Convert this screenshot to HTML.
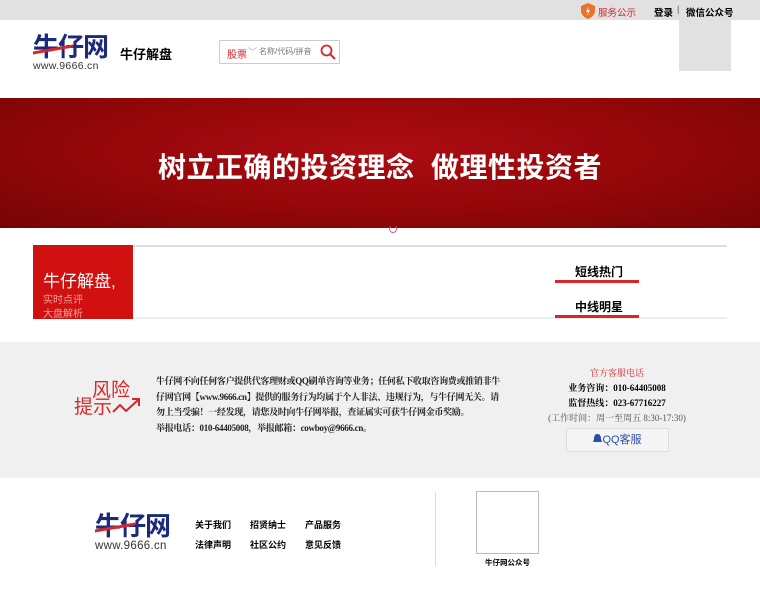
<!DOCTYPE html>
<html><head><meta charset="utf-8">
<style>
*{margin:0;padding:0;box-sizing:border-box}
body{width:760px;height:600px;overflow:hidden;background:#fff;font-family:"Liberation Sans","Noto Sans CJK SC",sans-serif;position:relative;color:#000}
.a{position:absolute}
.top{left:0;top:0;width:760px;height:20px;background:#e1e1e1}
.logo{font-weight:bold;color:#1b2a7a;letter-spacing:-1px}
.url{color:#333;font-size:11px;letter-spacing:0.3px}
.banner{left:0;top:98px;width:760px;height:130px;background:radial-gradient(ellipse at 50% 40%,#ac0c12 0%,#940709 55%,#760405 100%)}
.btxt{left:0;width:760px;top:146px;text-align:center;color:#fff;font-size:28px;font-weight:bold;letter-spacing:0.5px}
.risk{left:0;top:342px;width:760px;height:136px;background:#f0f0f0}
.sf{font-family:'Liberation Serif','Noto Serif CJK SC',serif}
</style></head><body>
<div class="a top"></div>
<svg class="a" style="left:581px;top:3px" width="14" height="16" viewBox="0 0 14 16"><path d="M7 0L14 3V8C14 12 10 15 7 16C4 15 0 12 0 8V3Z" fill="#e8742a"/><path d="M8 3L5 9H7L6 13L9 7H7Z" fill="#fff"/></svg>
<div class="a" style="left:598px;top:5px;font-size:9.5px;color:#d9262a">服务公示</div>
<div class="a" style="left:654px;top:5px;font-size:9.5px;font-weight:bold">登录</div>
<div class="a" style="left:677px;top:4px;font-size:9px;color:#555">|</div>
<div class="a" style="left:686px;top:5px;font-size:9.5px;font-weight:bold">微信公众号</div>
<div class="a" style="left:679px;top:20px;width:52px;height:51px;background:#e1e1e1"></div>

<div class="a logo" style="left:33px;top:33px;font-size:26px;line-height:28px">牛仔网</div>
<div class="a" style="left:33px;top:48px;width:40px;height:3px;background:#d9262a;transform:skewY(-10deg)"></div>
<div class="a url" style="left:33px;top:60px;font-size:10.5px">www.9666.cn</div>
<div class="a" style="left:120px;top:44px;font-size:13px;font-weight:bold">牛仔解盘</div>
<div class="a" style="left:219px;top:40px;width:121px;height:24px;border:1px solid #ccc;background:#fff"></div>
<div class="a" style="left:227px;top:46px;font-size:10px;color:#d9262a">股票</div>
<div class="a" style="left:248px;top:45px;font-size:9px;color:#aaa">﹀</div>
<div class="a" style="left:259px;top:46px;font-size:8px;color:#777">名称/代码/拼音</div>
<svg class="a" style="left:320px;top:44px" width="16" height="16" viewBox="0 0 16 16"><circle cx="6.5" cy="6.5" r="5" fill="none" stroke="#d9262a" stroke-width="1.8"/><path d="M10 10L15 15" stroke="#d9262a" stroke-width="2"/></svg>

<div class="a banner"></div>
<div class="a btxt">树立正确的投资理念&nbsp;&nbsp;做理性投资者</div>
<div class="a" style="left:389px;top:225px;width:8px;height:8px;border:1px solid #e57;border-radius:50%;border-top-color:transparent"></div>

<div class="a" style="left:33px;top:245px;width:694px;height:2px;background:#ddd"></div>
<div class="a" style="left:33px;top:317px;width:694px;height:2px;background:#eee"></div>
<div class="a" style="left:33px;top:245px;width:100px;height:74px;background:#d0110f"></div>
<div class="a" style="left:43px;top:267px;font-size:17px;color:#fff">牛仔解盘,</div>
<div class="a" style="left:43px;top:291px;font-size:10px;color:#f3a0a0">实时点评</div>
<div class="a" style="left:43px;top:305px;font-size:10px;color:#f3a0a0">大盘解析</div>
<div class="a" style="left:575px;top:263px;font-size:12px;font-weight:bold">短线热门</div>
<div class="a" style="left:555px;top:280px;width:84px;height:3px;background:#d9262a"></div>
<div class="a" style="left:575px;top:298px;font-size:12px;font-weight:bold">中线明星</div>
<div class="a" style="left:555px;top:315px;width:84px;height:3px;background:#d9262a"></div>

<div class="a risk"></div>
<div class="a" style="left:92px;top:381px;font-size:19px;color:#d9262a;line-height:19px">风险</div>
<div class="a" style="left:74px;top:398px;font-size:19px;color:#d9262a;line-height:19px">提示</div>
<svg class="a" style="left:112px;top:396px" width="30" height="20" viewBox="0 0 30 20"><path d="M1 16L8 9L14 15L26 4M20 3H27V10" fill="none" stroke="#d9262a" stroke-width="2"/></svg>
<div class="a sf" style="left:156px;top:374px;width:345px;font-size:9px;letter-spacing:-0.3px;line-height:15.5px;font-weight:bold;color:#222">牛仔网不向任何客户提供代客理财或QQ刷单咨询等业务；任何私下收取咨询费或推销非牛仔网官网【www.9666.cn】提供的服务行为均属于个人非法、违规行为，与牛仔网无关。请勿上当受骗！一经发现，请您及时向牛仔网举报，查证属实可获牛仔网金币奖励。<br>举报电话：010-64405008，举报邮箱：cowboy@9666.cn。</div>
<div class="a sf" style="left:540px;top:366px;width:154px;text-align:center;font-size:9px;line-height:15px;white-space:nowrap">
<div style="color:#d9262a">官方客服电话</div>
<div style="font-weight:bold">业务咨询：010-64405008</div>
<div style="font-weight:bold">监督热线：023-67716227</div>
<div style="color:#555">(工作时间：周一至周五 8:30-17:30)</div></div>
<div class="a" style="left:566px;top:428px;width:103px;height:24px;border:1px solid #ddd;background:#f5f5f5;text-align:center;font-size:11px;line-height:22px;color:#2a4fa8"><svg width="9" height="10" viewBox="0 0 9 10" style="vertical-align:-1px"><path d="M4.5 0C7 0 8 2 8 5L9 8H0L1 5C1 2 2 0 4.5 0Z" fill="#2a4fa8"/></svg>QQ客服</div>

<div class="a logo" style="left:95px;top:512px;font-size:26px;line-height:28px">牛仔网</div>
<div class="a" style="left:95px;top:526px;width:40px;height:3px;background:#d9262a;transform:skewY(-10deg)"></div>
<div class="a url" style="left:95px;top:540px;font-size:11.5px;color:#333">www.9666.cn</div>
<div class="a" style="left:195px;top:515px;font-size:9px;font-weight:bold;line-height:20px">
<div><span style="display:inline-block;width:55px">关于我们</span><span style="display:inline-block;width:55px">招贤纳士</span><span>产品服务</span></div>
<div><span style="display:inline-block;width:55px">法律声明</span><span style="display:inline-block;width:55px">社区公约</span><span>意见反馈</span></div></div>
<div class="a" style="left:435px;top:492px;width:1px;height:74px;background:#ddd"></div>
<div class="a" style="left:476px;top:491px;width:63px;height:63px;border:1px solid #bbb;background:#fff"></div>
<div class="a" style="left:476px;top:557px;width:63px;text-align:center;font-size:7.5px;font-weight:bold">牛仔网公众号</div>
</body></html>
